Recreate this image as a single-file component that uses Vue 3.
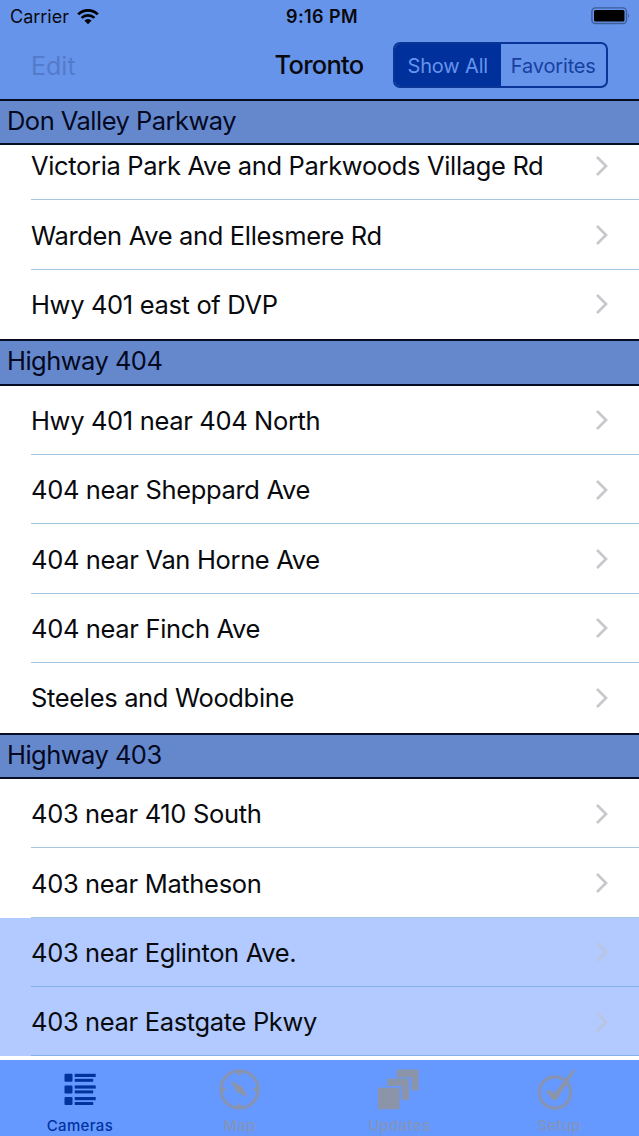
<script setup>
import { ref } from 'vue'

const mode = ref('Show All')
const activeTab = ref('Cameras')

const sections = [
  {
    name: 'Don Valley Parkway',
    cameras: [
      { name: 'Victoria Park Ave and Parkwoods Village Rd' },
      { name: 'Warden Ave and Ellesmere Rd' },
      { name: 'Hwy 401 east of DVP' },
    ],
  },
  {
    name: 'Highway 404',
    cameras: [
      { name: 'Hwy 401 near 404 North' },
      { name: '404 near Sheppard Ave' },
      { name: '404 near Van Horne Ave' },
      { name: '404 near Finch Ave' },
      { name: 'Steeles and Woodbine' },
    ],
  },
  {
    name: 'Highway 403',
    cameras: [
      { name: '403 near 410 South' },
      { name: '403 near Matheson' },
      { name: '403 near Eglinton Ave.', favorite: true },
      { name: '403 near Eastgate Pkwy', favorite: true },
    ],
  },
]

const tabs = ['Cameras', 'Map', 'Updates', 'Setup']
</script>

<template>
  <div class="screen">
    <div class="status">
      <div class="carrier">
        <span>Carrier</span>
        <svg width="22" height="16" viewBox="0 0 22 16">
          <path d="M1.2 5.4 A14 14 0 0 1 20.8 5.4" />
          <path d="M4.6 8.9 A9.2 9.2 0 0 1 17.4 8.9" />
          <path class="dot" d="M7.4 11.5 A5.4 5.4 0 0 1 14.6 11.5 L11 15.2 Z" />
        </svg>
      </div>
      <div class="time">9:16 PM</div>
      <svg class="battery" width="40" height="18" viewBox="0 0 40 18">
        <rect class="shell" x="0.9" y="0.9" width="34.6" height="15.6" rx="3.6" />
        <rect x="3" y="3" width="30.5" height="11.5" rx="1.5" />
        <path class="tip" d="M37.3 6 Q39.2 8.7 37.3 11.4 Z" />
      </svg>
    </div>

    <div class="navbar">
      <button class="edit" disabled>Edit</button>
      <h1>Toronto</h1>
      <div class="segments">
        <button
          v-for="item in ['Show All', 'Favorites']"
          :key="item"
          :class="{ on: mode === item }"
          @click="mode = item"
        >{{ item }}</button>
      </div>
    </div>

    <div class="list">
      <section v-for="section in sections" :key="section.name">
        <h2>{{ section.name }}</h2>
        <ul>
          <li v-for="camera in section.cameras" :key="camera.name" :class="{ favorite: camera.favorite }">
            <div class="cell">
              <span>{{ camera.name }}</span>
              <svg width="14" height="22" viewBox="0 0 14 22">
                <path d="M2 2 L11 11 L2 20" />
              </svg>
            </div>
          </li>
        </ul>
      </section>
    </div>

    <div class="tabbar">
      <button v-for="tab in tabs" :key="tab" :class="{ active: activeTab === tab }" @click="activeTab = tab">
        <svg width="44" height="44" viewBox="0 0 44 44">
          <g v-if="tab === 'Cameras'">
            <g v-for="y in [5.8, 17.4, 29]" :key="y">
              <rect x="6.5" :y="y" width="8" height="8" rx="1" />
              <rect x="16.7" :y="y" width="21" height="3.2" />
              <rect x="16.7" :y="y + 5" width="18.5" height="3" />
            </g>
          </g>
          <g v-else-if="tab === 'Map'">
            <circle class="line" cx="21.5" cy="21.5" r="18.7" />
            <path d="M18.5 4 H24.5 L21.5 8.5 Z M18.5 39 H24.5 L21.5 34.5 Z M4 18.5 V24.5 L8.5 21.5 Z M39 18.5 V24.5 L34.5 21.5 Z" />
            <path d="M12.5 12.5 L24.5 19 L29.5 29 L18.5 24 Z" />
          </g>
          <g v-else-if="tab === 'Updates'">
            <path d="M19.8 1.5 H41.5 V22.5 H34.5 V9.5 H19.8 Z" />
            <path d="M10.5 10.5 H32 V32 H24.5 V18 H10.5 Z" />
            <rect x="1" y="19.7" width="21.5" height="21.5" />
          </g>
          <g v-else>
            <circle class="line" cx="18" cy="24.5" r="15.7" />
            <path d="M9 24 L13 21.5 L17 25.5 L36.5 1 L38 3 L19.5 32 H15.5 Z" />
          </g>
        </svg>
        <span>{{ tab }}</span>
      </button>
    </div>
  </div>
</template>

<style>
body {
  margin: 0;
}
</style>

<style scoped>
* {
  box-sizing: border-box;
}

.screen {
  display: flex;
  flex-direction: column;
  width: 639px;
  height: 1136px;
  overflow: hidden;
  background: #fff;
  color: #080a0e;
  font-family: Inter, "Liberation Sans", sans-serif;
}

button {
  padding: 0;
  border: 0;
  background: none;
  font-family: inherit;
}

.status {
  flex: none;
  display: grid;
  grid-template-columns: 1fr auto 1fr;
  align-items: center;
  height: 33px;
  padding: 0 10px;
  background: #6794eb;
}

.carrier {
  display: flex;
  align-items: center;
  gap: 8px;
  font-size: 18px;
}

.carrier path {
  fill: none;
  stroke: #000;
  stroke-width: 2.7;
}

.carrier .dot {
  fill: #000;
  stroke: none;
}

.time {
  padding-left: 5px;
  font-size: 18px;
  font-weight: 600;
  letter-spacing: 0.4px;
}

.battery {
  justify-self: end;
  margin: -1px -2px 0 0;
}

.battery .shell {
  fill: none;
  stroke: #3d5c98;
  stroke-width: 1.4;
}

.battery .tip {
  fill: #3d5c98;
}

.navbar {
  flex: none;
  display: grid;
  grid-template-columns: 1fr auto 1fr;
  align-items: center;
  height: 66px;
  padding: 0 31px 2px;
  background: #6794eb;
}

.edit {
  justify-self: start;
  padding-top: 1px;
  color: #547bc9;
  font-size: 25px;
}

h1 {
  margin: 0 1px 1px 0;
  font-size: 25.5px;
  font-weight: 500;
  letter-spacing: -0.75px;
}

.segments {
  justify-self: end;
  display: flex;
  width: 215px;
  height: 46px;
  overflow: hidden;
  border: 2px solid #0a3596;
  border-radius: 7px;
}

.segments button {
  flex: 1;
  padding-top: 1px;
  color: #1740a0;
  font-size: 20px;
  letter-spacing: -0.15px;
}

.segments .on {
  background: #00309b;
  color: #6794eb;
}

.list {
  flex: 1;
  min-height: 0;
  overflow: hidden;
}

h2 {
  height: 46.4px;
  margin: 0;
  padding: 0 7px;
  border: solid #060c22;
  border-width: 2px 0;
  background: #6588cd;
  color: #040820;
  font-size: 25.5px;
  font-weight: 400;
  letter-spacing: -0.53px;
  line-height: 40px;
  white-space: nowrap;
}

ul {
  display: flex;
  flex-direction: column;
  justify-content: flex-end;
  margin: 0;
  padding: 0;
  list-style: none;
}

/* first section is scrolled part way under its pinned header */
section:first-child ul {
  height: 193.8px;
  overflow: hidden;
}

li {
  flex: none;
  height: 69.4px;
  padding-left: 31px;
}

li.favorite {
  background: #b2caff;
}

.cell {
  display: flex;
  align-items: center;
  justify-content: space-between;
  height: 100%;
  padding: 1px 30px 0 0;
  border-bottom: 1px solid #a5c8e0;
  font-size: 25.5px;
  letter-spacing: -0.34px;
  white-space: nowrap;
}

li:last-child .cell {
  border-color: transparent;
}

.cell path {
  fill: none;
  stroke: #c7c7cc;
  stroke-width: 2.7;
}

.favorite .cell,
li.favorite:last-child .cell {
  border-color: #86afea;
}

.favorite path {
  stroke: #bcc3dc;
}

.tabbar {
  flex: none;
  display: grid;
  grid-template-columns: repeat(4, 1fr);
  height: 76px;
  background: #6699ff;
}

.tabbar button {
  display: flex;
  flex-direction: column;
  align-items: center;
  padding-top: 8px;
  color: #8294bc;
  fill: #8c94aa;
}

.tabbar .line {
  fill: none;
  stroke: #8793b2;
  stroke-width: 3.2;
}

.tabbar .active {
  color: #00339e;
  fill: #00339e;
}

.tabbar span {
  margin-top: 5px;
  font-size: 15px;
  font-weight: 500;
  letter-spacing: 0.35px;
  line-height: 18px;
}
</style>
